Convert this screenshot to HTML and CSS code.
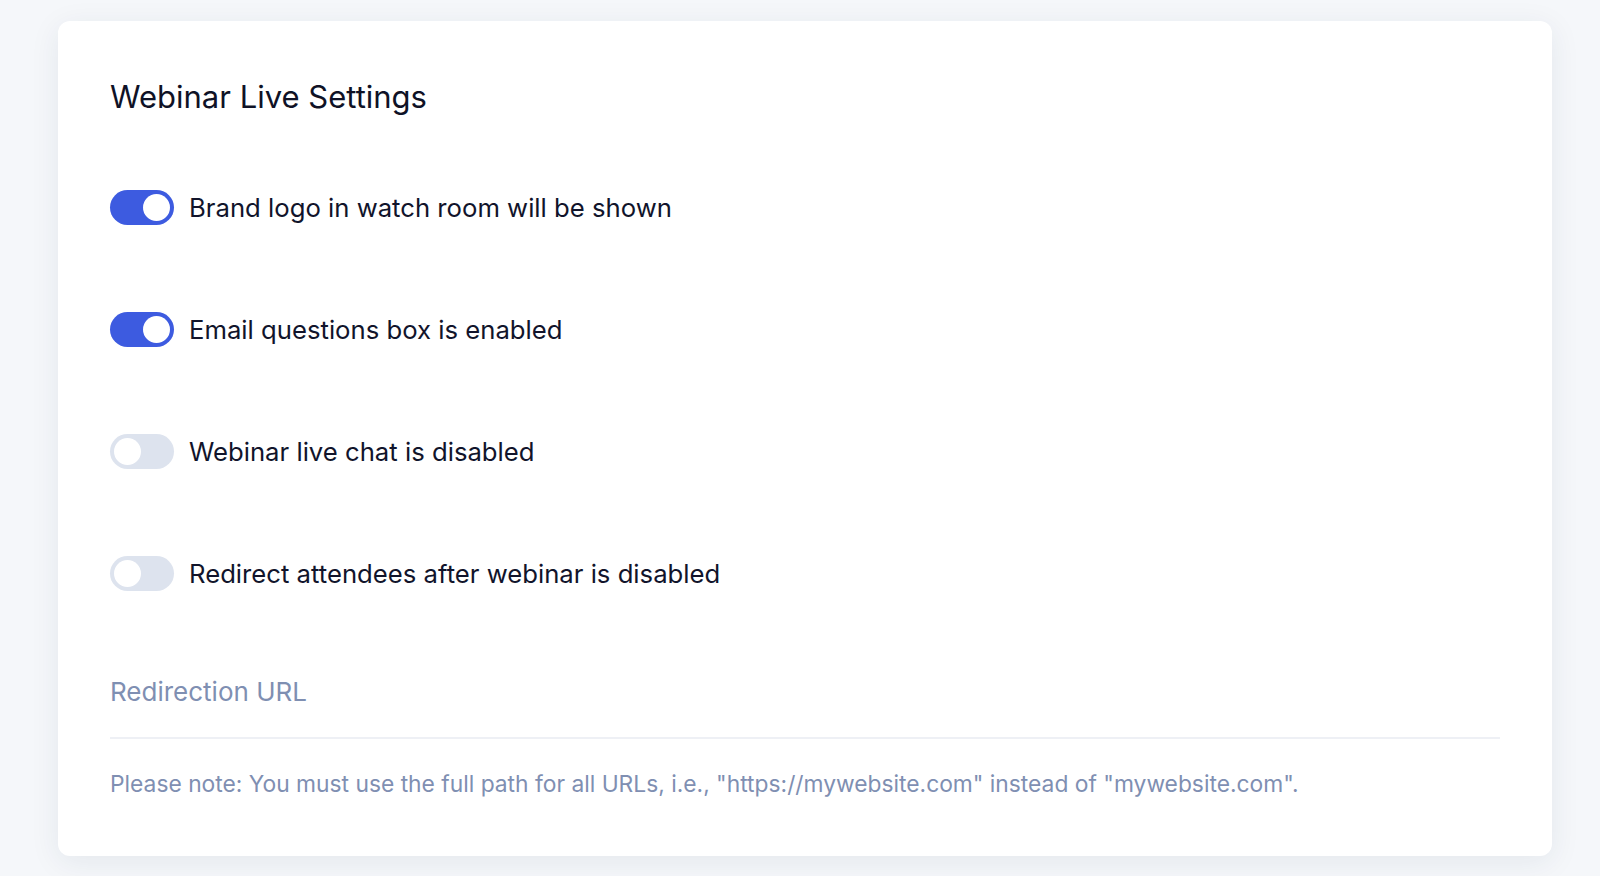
FILE: index.html
```html
<!DOCTYPE html>
<html lang="en">
<head>
<meta charset="utf-8">
<title>Webinar Live Settings</title>
<link rel="stylesheet" href="styles.css">
</head>
<body>
<main class="page">
  <section class="card">
    <h1 class="title">Webinar Live Settings</h1>
    <ul class="toggles">
      <li class="toggle-row">
        <span class="switch on"><span class="knob"></span></span>
        <span class="toggle-label">Brand logo in watch room will be shown</span>
      </li>
      <li class="toggle-row">
        <span class="switch on"><span class="knob"></span></span>
        <span class="toggle-label">Email questions box is enabled</span>
      </li>
      <li class="toggle-row">
        <span class="switch"><span class="knob"></span></span>
        <span class="toggle-label">Webinar live chat is disabled</span>
      </li>
      <li class="toggle-row">
        <span class="switch"><span class="knob"></span></span>
        <span class="toggle-label">Redirect attendees after webinar is disabled</span>
      </li>
    </ul>
    <div class="field">
      <input class="url-input" type="text" placeholder="Redirection URL">
    </div>
    <p class="note">Please note: You must use the full path for all URLs, i.e., "https://mywebsite.com" instead of "mywebsite.com".</p>
  </section>
</main>
</body>
</html>
```

FILE: styles.css
```css
* { box-sizing: border-box; }
html, body { margin: 0; padding: 0; }
body {
  background: #f5f7fa;
  font-family: Inter, "Noto Sans", sans-serif;
  color: #11142b;
  width: 1600px;
  height: 876px;
  overflow: hidden;
}
.page {
  padding: 21px 48px 21px 58px;
}
.card {
  background: #ffffff;
  border-radius: 12px;
  box-shadow: 0 6px 30px rgba(30, 45, 80, 0.08);
  padding: 56px 52px 58px 52px;
}
.title {
  margin: 0;
  font-size: 31px;
  line-height: 40px;
  font-weight: 400;
  color: #0f1226;
}
.toggles {
  list-style: none;
  margin: 73px 0 0 0;
  padding: 0;
  display: flex;
  flex-direction: column;
  gap: 87px;
}
.toggle-row {
  display: flex;
  align-items: center;
  gap: 15px;
  height: 35px;
}
.switch {
  width: 64px;
  height: 35px;
  border-radius: 18px;
  background: #dde3ee;
  display: flex;
  align-items: center;
  padding: 0 4px;
  flex-shrink: 0;
}
.switch.on {
  background: #3d5be0;
  justify-content: flex-end;
}
.knob {
  width: 27px;
  height: 27px;
  border-radius: 50%;
  background: #ffffff;
}
.toggle-label {
  font-size: 25.7px;
  line-height: 35px;
  color: #11142b;
}
.field {
  margin-top: 85.5px;
  border-bottom: 2px solid #eef0f5;
  padding-bottom: 30px;
}
.url-input {
  width: 100%;
  border: none;
  outline: none;
  background: transparent;
  font-family: inherit;
  font-size: 26px;
  line-height: 30px;
  height: 30px;
  padding: 0;
  color: #11142b;
}
.url-input::placeholder {
  color: #7f8fb2;
}
.note {
  margin: 31px 0 0 0;
  font-size: 22.8px;
  line-height: 28px;
  color: #7f8fb2;
}
```
